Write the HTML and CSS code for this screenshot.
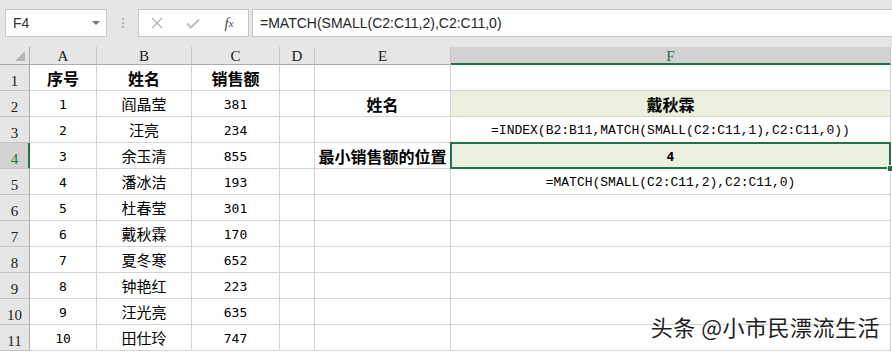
FILE: index.html
```html
<!DOCTYPE html>
<html lang="zh-CN">
<head>
    <meta charset="UTF-8">
    <title>MATCH SMALL</title>
    <link rel="stylesheet" href="styles.css">
</head>
<body>
    <!-- formula bar -->
    <div class="toolbar">
        <div class="namebox">
            <span>F4</span>
            <span class="drop"></span>
        </div>
        <div class="grip"><i></i><i></i><i></i></div>
        <div class="fbtns">
            <span class="slot">
                <svg width="12" height="12" viewBox="0 0 12 12"><path d="M1 1L11 11M11 1L1 11" stroke="#b3b3b3" stroke-width="1.3" fill="none"/></svg>
            </span>
            <span class="slot">
                <svg width="14" height="11" viewBox="0 0 14 11"><path d="M1 5.5L5 9.5L13 1.5" stroke="#bdbdbd" stroke-width="2" fill="none"/></svg>
            </span>
            <span class="slot fx">f<small>x</small></span>
        </div>
        <div class="finput">=MATCH(SMALL(C2:C11,2),C2:C11,0)</div>
    </div>

    <!-- sheet -->
    <div class="sheet">
        <div class="hd corner"><span class="tri"></span></div>
        <div class="hd">A</div>
        <div class="hd">B</div>
        <div class="hd">C</div>
        <div class="hd">D</div>
        <div class="hd">E</div>
        <div class="hd hd-sel">F</div>

        <div class="rh">1</div>
        <div class="c b">序号</div>
        <div class="c b">姓名</div>
        <div class="c b">销售额</div>
        <div class="c"></div>
        <div class="c"></div>
        <div class="c"></div>

        <div class="rh">2</div>
        <div class="c num">1</div>
        <div class="c">阎晶莹</div>
        <div class="c num">381</div>
        <div class="c"></div>
        <div class="c b">姓名</div>
        <div class="c b fill">戴秋霖</div>

        <div class="rh">3</div>
        <div class="c num">2</div>
        <div class="c">汪亮</div>
        <div class="c num">234</div>
        <div class="c"></div>
        <div class="c"></div>
        <div class="c formula">=INDEX(B2:B11,MATCH(SMALL(C2:C11,1),C2:C11,0))</div>

        <div class="rh rh-sel">4</div>
        <div class="c num">3</div>
        <div class="c">余玉清</div>
        <div class="c num">855</div>
        <div class="c"></div>
        <div class="c b">最小销售额的位置</div>
        <div class="c fill active"><span class="numb">4</span><span class="handle"></span></div>

        <div class="rh">5</div>
        <div class="c num">4</div>
        <div class="c">潘冰洁</div>
        <div class="c num">193</div>
        <div class="c"></div>
        <div class="c"></div>
        <div class="c formula">=MATCH(SMALL(C2:C11,2),C2:C11,0)</div>

        <div class="rh">6</div>
        <div class="c num">5</div>
        <div class="c">杜春莹</div>
        <div class="c num">301</div>
        <div class="c"></div>
        <div class="c"></div>
        <div class="c"></div>

        <div class="rh">7</div>
        <div class="c num">6</div>
        <div class="c">戴秋霖</div>
        <div class="c num">170</div>
        <div class="c"></div>
        <div class="c"></div>
        <div class="c"></div>

        <div class="rh">8</div>
        <div class="c num">7</div>
        <div class="c">夏冬寒</div>
        <div class="c num">652</div>
        <div class="c"></div>
        <div class="c"></div>
        <div class="c"></div>

        <div class="rh">9</div>
        <div class="c num">8</div>
        <div class="c">钟艳红</div>
        <div class="c num">223</div>
        <div class="c"></div>
        <div class="c"></div>
        <div class="c"></div>

        <div class="rh">10</div>
        <div class="c num">9</div>
        <div class="c">汪光亮</div>
        <div class="c num">635</div>
        <div class="c"></div>
        <div class="c"></div>
        <div class="c"></div>

        <div class="rh">11</div>
        <div class="c num">10</div>
        <div class="c">田仕玲</div>
        <div class="c num">747</div>
        <div class="c"></div>
        <div class="c"></div>
        <div class="c"></div>
    </div>

    <div class="watermark">头条 @小市民漂流生活</div>
</body>
</html>
```

FILE: styles.css
```css
body {
    margin: 0;
    width: 892px;
    height: 352px;
    overflow: hidden;
    position: relative;
    background-color: #ffffff;
    font-family: "Noto Sans CJK SC", sans-serif;
}

/* formula bar */
.toolbar {
    display: flex;
    align-items: flex-start;
    height: 47px;
    box-sizing: border-box;
    padding: 9px 0 0 5px;
    background-color: #e6e6e6;
}
.namebox {
    display: flex;
    align-items: center;
    justify-content: space-between;
    width: 102px;
    height: 28px;
    box-sizing: border-box;
    padding: 0 6px 0 7px;
    border: 1px solid #c6c6c6;
    background-color: #ffffff;
    font-family: "Liberation Sans", Arial, sans-serif;
    font-size: 14px;
    color: #333;
}
.drop {
    width: 0;
    height: 0;
    border-left: 4px solid transparent;
    border-right: 4px solid transparent;
    border-top: 4px solid #767676;
}
.grip {
    display: flex;
    flex-direction: column;
    align-items: center;
    gap: 2px;
    width: 31px;
    padding-top: 9px;
}
.grip i {
    display: block;
    width: 2px;
    height: 2px;
    background-color: #b5b5b5;
}
.fbtns {
    display: flex;
    width: 111px;
    height: 28px;
    box-sizing: border-box;
    border: 1px solid #c6c6c6;
    background-color: #ffffff;
    margin-right: 3px;
}
.slot {
    display: flex;
    align-items: center;
    justify-content: center;
    width: 36px;
}
.fx {
    font-family: "Liberation Serif", serif;
    font-style: italic;
    font-size: 15px;
    color: #4a4a4a;
}
.fx small {
    font-size: 11px;
}
.finput {
    flex: 1;
    height: 28px;
    box-sizing: border-box;
    padding-left: 7px;
    border: 1px solid #c6c6c6;
    border-right: none;
    background-color: #ffffff;
    font-family: "Liberation Sans", Arial, sans-serif;
    font-size: 14px;
    line-height: 26px;
    color: #262626;
}

/* sheet grid */
.sheet {
    display: grid;
    grid-template-columns: 30px 67px 95px 88px 35px 136px 440px;
    grid-template-rows: 18px repeat(11, 26px);
}
.sheet > div {
    box-sizing: border-box;
    border-right: 1px solid #d4d4d4;
    border-bottom: 1px solid #d4d4d4;
    display: flex;
    align-items: center;
    justify-content: center;
    white-space: nowrap;
}
.sheet > .hd {
    background-color: #e6e6e6;
    border-right-color: #c4c4c4;
    border-bottom-color: #ababab;
    font-family: "Liberation Serif", serif;
    font-size: 15px;
    color: #222;
    padding-top: 1px;
}
.sheet > .corner {
    justify-content: flex-end;
    align-items: flex-end;
    padding: 0 4px 3px 0;
    border-right-color: #ababab;
}
.tri {
    width: 0;
    height: 0;
    border-left: 10px solid transparent;
    border-bottom: 10px solid #b4b4b4;
}
.sheet > .hd-sel {
    background-color: #d2d2d2;
    color: #217346;
    border-bottom-color: #217346;
    box-shadow: inset 0 -1px 0 #217346;
}
.sheet > .rh {
    background-color: #e6e6e6;
    border-right-color: #ababab;
    border-bottom-color: #c4c4c4;
    align-items: flex-end;
    padding-bottom: 1px;
    font-family: "Liberation Serif", serif;
    font-size: 15px;
    line-height: 16px;
    color: #222;
}
.sheet > .rh-sel {
    background-color: #d2d2d2;
    color: #217346;
    border-right-color: #217346;
    box-shadow: inset -1px 0 0 #217346;
}
.c {
    font-size: 15px;
    color: #000;
}
.b {
    font-weight: bold;
    font-size: 16px;
}
.num {
    font-family: "DejaVu Sans Mono", monospace;
    font-size: 13px;
    padding-top: 2px;
}
.formula {
    font-family: "Liberation Mono", monospace;
    font-size: 13px;
    padding-top: 2px;
}
.numb {
    font-family: "DejaVu Sans Mono", monospace;
    font-weight: bold;
    font-size: 13px;
    padding-top: 2px;
}
.fill {
    background-color: #ebf1de;
}
.active {
    position: relative;
}
.active::after {
    content: "";
    position: absolute;
    top: -1px;
    left: -1px;
    right: -1px;
    bottom: -1px;
    border: 2px solid #217346;
}
.handle {
    position: absolute;
    right: -4px;
    bottom: -4px;
    width: 5px;
    height: 5px;
    background-color: #217346;
    border: 1px solid #ffffff;
    z-index: 2;
}

/* watermark over the grid */
.watermark {
    position: absolute;
    right: 12px;
    bottom: 10px;
    font-size: 22px;
    letter-spacing: 0.5px;
    color: #1e1e1e;
    text-shadow: 1px 1px 0 #ffffff, -1px 0 0 #ffffff;
}
```
